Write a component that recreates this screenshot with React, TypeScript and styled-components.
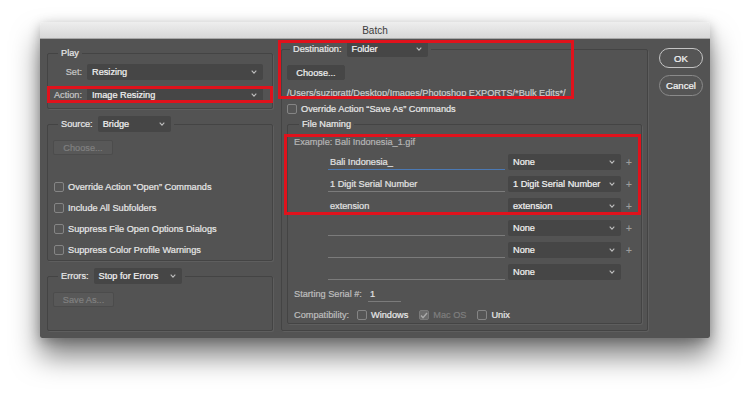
import React from "react";
import styled, { createGlobalStyle } from "styled-components";

const Global = createGlobalStyle`
  html, body { margin: 0; padding: 0; background: #ffffff; }
  body { font-family: "Liberation Sans", Arial, sans-serif; }
  * { box-sizing: border-box; }
`;

const Page = styled.div`
  width: 750px;
  height: 395px;
  overflow: hidden;
  background: #ffffff;
  padding: 22px 0 0 40px;
`;

const Window = styled.div`
  width: 670px;
  height: 316px;
  display: flex;
  flex-direction: column;
  border-radius: 4px 4px 2px 2px;
  box-shadow: 0 18px 28px rgba(0, 0, 0, 0.5), 0 3px 12px rgba(0, 0, 0, 0.25);
`;

const TitleBar = styled.div`
  height: 17px;
  flex: none;
  background: linear-gradient(#eeeeee, #d8d8d8);
  border-bottom: 1px solid #a8a8a8;
  border-radius: 4px 4px 0 0;
  display: flex;
  align-items: center;
  justify-content: center;
  padding-top: 1px;
  font-size: 10px;
  color: #3c3c3c;
`;

const Body = styled.div`
  position: relative;
  flex: 1;
  display: flex;
  background: #535353;
  padding: 0 7px 7px 7px;
  font-size: 9.2px;
  color: #e4e4e4;
  -webkit-text-stroke: 0.22px currentColor;
  border-radius: 0 0 2px 2px;
`;

const LeftColumn = styled.div`
  width: 226px;
  flex: none;
  display: flex;
  flex-direction: column;
  gap: 7px;
  padding-top: 8px;
`;

const RightColumn = styled.div`
  width: 367px;
  flex: none;
  margin-left: 8px;
  display: flex;
  flex-direction: column;
  padding-top: 2px;
`;

const ButtonColumn = styled.div`
  width: 44px;
  flex: none;
  margin-left: 11px;
  display: flex;
  flex-direction: column;
  gap: 7px;
  padding-top: 9px;
`;

const Group = styled.fieldset<{ $pad: string; $grow?: boolean; $mt?: number }>`
  margin: ${(p) => p.$mt ?? 0}px 0 0 0;
  min-width: 0;
  border: 1px solid #444444;
  border-radius: 2px;
  box-shadow: 1px 1px 0 #5e5e5e;
  padding: ${(p) => p.$pad};
  ${(p) => (p.$grow ? "flex: 1;" : "")}
`;

const Legend = styled.legend<{ $ml: number }>`
  margin-left: ${(p) => p.$ml}px;
  padding: 0 3px;
  display: flex;
  align-items: center;
  gap: 5px;
  line-height: 12px;
  color: #e8e8e8;
`;

const FormRow = styled.div<{ $mt?: number }>`
  display: flex;
  align-items: center;
  gap: 5px;
  height: 16px;
  margin-top: ${(p) => p.$mt ?? 0}px;
`;

const FormLabel = styled.span`
  width: 29px;
  text-align: right;
  color: #c6c6c6;
  white-space: nowrap;
`;

const SelectBox = styled.div<{ $w: number }>`
  width: ${(p) => p.$w}px;
  height: 16px;
  flex: none;
  display: flex;
  align-items: center;
  justify-content: space-between;
  padding: 0 6px 0 5px;
  background: #464646;
  border-radius: 2px;
  color: #f2f2f2;
  white-space: nowrap;
`;

const ChevronIcon = () => (
  <svg width="6" height="4" viewBox="0 0 6 4">
    <path d="M0.7 0.7L3 3.1L5.3 0.7" fill="none" stroke="#bdbdbd" strokeWidth="1.1" />
  </svg>
);

const Select = ({ value, w }: { value: string; w: number }) => (
  <SelectBox $w={w}>
    <span>{value}</span>
    <ChevronIcon />
  </SelectBox>
);

const Button = styled.div<{ $w: number; $disabled?: boolean; $mt?: number }>`
  width: ${(p) => p.$w}px;
  height: 15px;
  margin-top: ${(p) => p.$mt ?? 0}px;
  display: flex;
  align-items: center;
  justify-content: center;
  border-radius: 2px;
  background: ${(p) => (p.$disabled ? "#585858" : "#464646")};
  border: 1px solid ${(p) => (p.$disabled ? "#4c4c4c" : "#464646")};
  color: ${(p) => (p.$disabled ? "#808080" : "#f0f0f0")};
`;

const CheckList = styled.div`
  margin-top: 21px;
  display: flex;
  flex-direction: column;
`;

const CheckRow = styled.div<{ $h: number; $mt?: number }>`
  height: ${(p) => p.$h}px;
  margin-top: ${(p) => p.$mt ?? 0}px;
  display: flex;
  align-items: center;
  gap: 4px;
  color: #e6e6e6;
  white-space: nowrap;
`;

const Box = styled.span<{ $checked?: boolean; $ml?: number }>`
  width: 10px;
  height: 10px;
  flex: none;
  margin-left: ${(p) => p.$ml ?? 0}px;
  border: 1px solid ${(p) => (p.$checked ? "#7a7a7a" : "#858585")};
  border-radius: 2px;
  background: ${(p) => (p.$checked ? "#6c6c6c" : "#565656")};
  display: flex;
  align-items: center;
  justify-content: center;
`;

const CheckMark = () => (
  <svg width="8" height="7" viewBox="0 0 8 7">
    <path d="M1 3.6L3 5.6L7 1" fill="none" stroke="#a9a9a9" strokeWidth="1.4" />
  </svg>
);

const PathText = styled.div`
  margin-top: 7px;
  line-height: 12px;
  color: #cdcdcd;
  white-space: nowrap;
`;

const ExampleText = styled.div`
  line-height: 12px;
  color: #b4b4b4;
`;

const NameRows = styled.div`
  margin-top: 3px;
  display: flex;
  flex-direction: column;
`;

const NameRow = styled.div`
  height: 22px;
  display: flex;
  align-items: center;
  padding-left: 34px;
`;

const TextField = styled.div<{ $focus?: boolean; $w: number }>`
  width: ${(p) => p.$w}px;
  height: 16px;
  flex: none;
  padding: 0 2px;
  display: flex;
  align-items: center;
  border-bottom: 1px solid ${(p) => (p.$focus ? "#4b79b4" : "#7b7b7b")};
  color: #e2e2e2;
  white-space: nowrap;
`;

const Spacer = styled.span`
  width: 3px;
  flex: none;
`;

const Plus = styled.span`
  margin-left: 5px;
  color: #9d9d9d;
  font-size: 10px;
`;

const InfoRow = styled.div<{ $h: number; $mt: number }>`
  height: ${(p) => p.$h}px;
  margin-top: ${(p) => p.$mt}px;
  display: flex;
  align-items: center;
  gap: 11px;
`;

const InfoLabel = styled.span<{ $w: number }>`
  width: ${(p) => p.$w}px;
  flex: none;
  color: #bdbdbd;
  white-space: nowrap;
`;

const Option = styled.span<{ $disabled?: boolean }>`
  display: flex;
  align-items: center;
  gap: 4px;
  color: ${(p) => (p.$disabled ? "#7e7e7e" : "#e8e8e8")};
`;

const PushButton = styled.div<{ $default?: boolean; $h: number }>`
  width: 44px;
  height: ${(p) => p.$h}px;
  border-radius: 11px;
  border: 1.5px solid ${(p) => (p.$default ? "#c4c4c4" : "#8a8a8a")};
  background: #555555;
  color: #f4f4f4;
  font-size: 9.6px;
  display: flex;
  align-items: center;
  justify-content: center;
`;

const Highlight = styled.div<{ $l: number; $t: number; $w: number; $h: number }>`
  position: absolute;
  left: ${(p) => p.$l}px;
  top: ${(p) => p.$t}px;
  width: ${(p) => p.$w}px;
  height: ${(p) => p.$h}px;
  border: 3px solid #e0121c;
  pointer-events: none;
`;

const rows: { text: string; sel: string; focus?: boolean; plus: boolean }[] = [
  { text: "Bali Indonesia_", sel: "None", focus: true, plus: true },
  { text: "1 Digit Serial Number", sel: "1 Digit Serial Number", plus: true },
  { text: "extension", sel: "extension", plus: true },
  { text: "", sel: "None", plus: true },
  { text: "", sel: "None", plus: true },
  { text: "", sel: "None", plus: false },
];

export default function App() {
  return (
    <Page>
      <Global />
      <Window>
        <TitleBar>Batch</TitleBar>
        <Body>
          <LeftColumn>
            <Group $pad="5px 8px 5px 5px">
              <Legend $ml={5}>Play</Legend>
              <FormRow>
                <FormLabel>Set:</FormLabel>
                <Select value="Resizing" w={176} />
              </FormRow>
              <FormRow $mt={7}>
                <FormLabel>Action:</FormLabel>
                <Select value="Image Resizing" w={176} />
              </FormRow>
            </Group>
            <Group $pad="8px 8px 0 5px">
              <Legend $ml={5}>
                <span>Source:</span>
                <Select value="Bridge" w={73} />
              </Legend>
              <Button $w={60} $disabled>
                Choose...
              </Button>
              <CheckList>
                {[
                  "Override Action \u201cOpen\u201d Commands",
                  "Include All Subfolders",
                  "Suppress File Open Options Dialogs",
                  "Suppress Color Profile Warnings",
                ].map((t) => (
                  <CheckRow key={t} $h={21}>
                    <Box $ml={1} />
                    <span>{t}</span>
                  </CheckRow>
                ))}
              </CheckList>
            </Group>
            <Group $pad="8px 8px 0 5px" $grow>
              <Legend $ml={5}>
                <span>Errors:</span>
                <Select value="Stop for Errors" w={88} />
              </Legend>
              <Button $w={61} $disabled>
                Save As...
              </Button>
            </Group>
          </LeftColumn>

          <RightColumn>
            <Group $pad="8px 5px 6px 5px" $grow>
              <Legend $ml={3}>
                <span>Destination:</span>
                <Select value="Folder" w={81} />
              </Legend>
              <Button $w={58}>Choose...</Button>
              <PathText>/Users/suzipratt/Desktop/Images/Photoshop EXPORTS/*Bulk Edits*/</PathText>
              <CheckRow $h={12} $mt={4}>
                <Box />
                <span>Override Action “Save As” Commands</span>
              </CheckRow>
              <Group $pad="6px 5px 0 6px" $mt={3}>
                <Legend $ml={5}>File Naming</Legend>
                <ExampleText>Example: Bali Indonesia_1.gif</ExampleText>
                <NameRows>
                  {rows.map((r, i) => (
                    <NameRow key={i}>
                      <TextField $w={177} $focus={r.focus}>
                        {r.text}
                      </TextField>
                      <Spacer />
                      <Select value={r.sel} w={113} />
                      {r.plus && <Plus>+</Plus>}
                    </NameRow>
                  ))}
                </NameRows>
                <InfoRow $h={18} $mt={2}>
                  <InfoLabel $w={63}>Starting Serial #:</InfoLabel>
                  <TextField $w={33}>1</TextField>
                </InfoRow>
                <InfoRow $h={16} $mt={4}>
                  <InfoLabel $w={52}>Compatibility:</InfoLabel>
                  <Option>
                    <Box />
                    Windows
                  </Option>
                  <Option $disabled>
                    <Box $checked>
                      <CheckMark />
                    </Box>
                    Mac OS
                  </Option>
                  <Option>
                    <Box />
                    Unix
                  </Option>
                </InfoRow>
              </Group>
            </Group>
          </RightColumn>

          <ButtonColumn>
            <PushButton $default $h={20}>
              OK
            </PushButton>
            <PushButton $h={21}>Cancel</PushButton>
          </ButtonColumn>

          <Highlight $l={7} $t={47} $w={226} $h={17} />
          <Highlight $l={238} $t={1} $w={296} $h={59} />
          <Highlight $l={244} $t={95} $w={357} $h={81} />
        </Body>
      </Window>
    </Page>
  );
}
